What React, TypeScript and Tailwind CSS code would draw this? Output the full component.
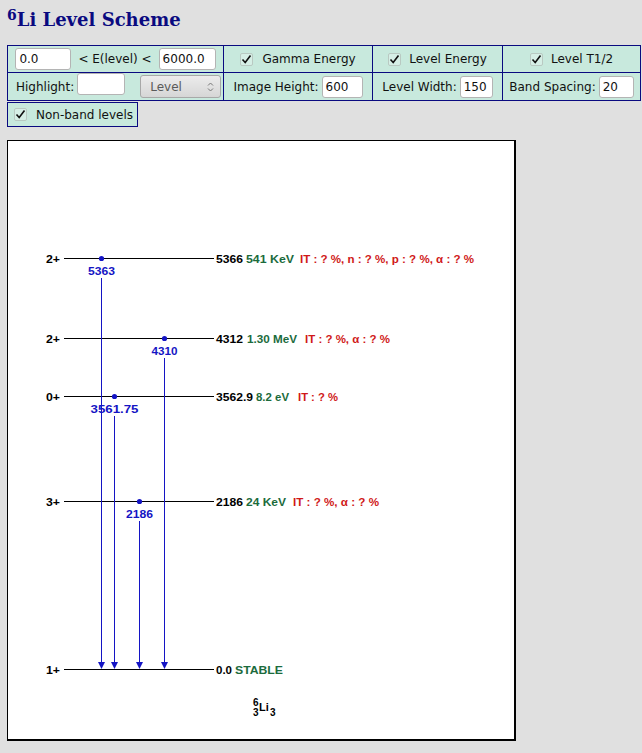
import React from "react";

const UI = { fontFamily: '"DejaVu Sans", Verdana, sans-serif' };
const DIAG = '"Liberation Sans", Arial, sans-serif';

function Check() {
  return (
    <span className="inline-flex items-center justify-center w-[13px] h-[13px] border border-[#b9c9c2] rounded-[2px] bg-[#d6efe6]">
      <svg width="11" height="11" viewBox="0 0 11 11">
        <path d="M1.5 5.5 L4.2 8.5 L9.5 1.5" fill="none" stroke="#111" strokeWidth="1.6" />
      </svg>
    </span>
  );
}

function Field({ value, w }: { value: string; w: string }) {
  return (
    <span
      className={`inline-flex items-center h-[22px] ${w} bg-white border border-[#b4b4b4] rounded-[3px] pl-[3px] text-[12px] text-[#111]`}
    >
      {value}
    </span>
  );
}

type Seg = { s: string; x: number; w: number };

// levels in svg coordinates (origin = inside top-left of image frame)
const levels: { y: number; spin: string; e: Seg; t: Seg; d?: Seg }[] = [
  {
    y: 117,
    spin: "2+",
    e: { s: "5366", x: 208, w: 27 },
    t: { s: "541 KeV", x: 238, w: 48 },
    d: { s: "IT : ? %, n : ? %, p : ? %, α : ? %", x: 292, w: 174 },
  },
  {
    y: 197,
    spin: "2+",
    e: { s: "4312", x: 208, w: 27 },
    t: { s: "1.30 MeV", x: 239, w: 50 },
    d: { s: "IT : ? %, α : ? %", x: 297, w: 85 },
  },
  {
    y: 255,
    spin: "0+",
    e: { s: "3562.9", x: 208, w: 37 },
    t: { s: "8.2 eV", x: 248, w: 33 },
    d: { s: "IT : ? %", x: 290, w: 40 },
  },
  {
    y: 360,
    spin: "3+",
    e: { s: "2186", x: 208, w: 27 },
    t: { s: "24 KeV", x: 238, w: 40 },
    d: { s: "IT : ? %, α : ? %", x: 285, w: 86 },
  },
  {
    y: 528,
    spin: "1+",
    e: { s: "0.0", x: 208, w: 16 },
    t: { s: "STABLE", x: 227, w: 48 },
  },
];

const gammas = [
  { x: 93, from: 117, label: "5363", w: 27 },
  { x: 156, from: 197, label: "4310", w: 26 },
  { x: 106, from: 255, label: "3561.75", w: 48 },
  { x: 131, from: 360, label: "2186", w: 27 },
];

function T({ seg, y, fill }: { seg: Seg; y: number; fill: string }) {
  return (
    <text x={seg.x} y={y} fill={fill} textLength={seg.w} lengthAdjust="spacingAndGlyphs">
      {seg.s}
    </text>
  );
}

function Scheme() {
  const blue = "#1414c4";
  return (
    <svg width="506" height="598" viewBox="0 0 506 598" fontFamily={DIAG} fontWeight="bold" fontSize="11">
      {levels.map((l) => (
        <g key={l.e.s}>
          <text x="38" y={l.y + 4.5} fill="#000" textLength="14" lengthAdjust="spacingAndGlyphs">
            {l.spin}
          </text>
          <line x1="56" x2="206" y1={l.y + 0.5} y2={l.y + 0.5} stroke="#000" strokeWidth="1" />
          <T seg={l.e} y={l.y + 4.5} fill="#000" />
          <T seg={l.t} y={l.y + 4.5} fill="#1b6b3c" />
          {l.d && <T seg={l.d} y={l.y + 4.5} fill="#d01818" />}
        </g>
      ))}
      {gammas.map((g) => (
        <g key={g.label}>
          <line x1={g.x + 0.5} x2={g.x + 0.5} y1={g.from + 20} y2="522" stroke={blue} strokeWidth="1" />
          <circle cx={g.x + 0.5} cy={g.from + 0.5} r="2.6" fill={blue} />
          <text
            x={g.x + 0.5 - g.w / 2}
            y={g.from + 16.5}
            fill={blue}
            textLength={g.w}
            lengthAdjust="spacingAndGlyphs"
          >
            {g.label}
          </text>
          <polygon points={`${g.x - 3},521 ${g.x + 4},521 ${g.x + 0.5},528`} fill={blue} />
        </g>
      ))}
      <text x="245" y="565" fill="#000" fontSize="10">6</text>
      <text x="245" y="575" fill="#000" fontSize="10">3</text>
      <text x="251" y="570" fill="#000" fontSize="11">Li</text>
      <text x="262" y="575" fill="#000" fontSize="10">3</text>
    </svg>
  );
}

export default function App() {
  return (
    <div className="min-h-screen bg-[#e0e0e0] pl-[7px] pt-[8px] pb-4" style={UI}>
      {/* Title */}
      <h1
        className="h-[24px] leading-[24px] text-[18px] font-bold text-[#0a0a80] whitespace-nowrap"
        style={{ fontFamily: '"DejaVu Serif", "Liberation Serif", serif' }}
      >
        <span className="text-[14px] relative -top-[6px]">6</span>Li Level Scheme
      </h1>

      {/* Controls */}
      <div className="mt-[13px] grid grid-cols-[215px_148px_129px_137px] grid-rows-[26px_27px] gap-px p-px bg-[#0a0a80] w-max text-[12px] text-[#111] whitespace-nowrap">
        <div className="bg-[#c8e9dd] flex items-center justify-center gap-[7px]">
          <Field value="0.0" w="w-[56px]" />
          <span>&lt; E(level) &lt;</span>
          <Field value="6000.0" w="w-[57px]" />
        </div>
        <div className="bg-[#c8e9dd] flex items-center justify-center gap-[9px]">
          <Check />
          <span>Gamma Energy</span>
        </div>
        <div className="bg-[#c8e9dd] flex items-center justify-center gap-[8px]">
          <Check />
          <span>Level Energy</span>
        </div>
        <div className="bg-[#c8e9dd] flex items-center justify-center gap-[8px]">
          <Check />
          <span>Level T1/2</span>
        </div>

        <div className="bg-[#c8e9dd] flex items-center pl-[8px]">
          <span>Highlight:</span>
          <span className="ml-[3px]">
            <Field value="" w="w-[48px]" />
          </span>
          <span className="ml-[15px] inline-flex items-center justify-between h-[23px] w-[81px] rounded-[3px] border border-[#a8a8a8] bg-gradient-to-b from-[#ececec] to-[#d6d6d6] pl-[9px] pr-[6px] text-[#5a5a5a]">
            Level
            <svg width="7" height="12" viewBox="0 0 7 12">
              <path d="M1 4.5 L3.5 2 L6 4.5" fill="none" stroke="#777" strokeWidth="1" />
              <path d="M1 7.5 L3.5 10 L6 7.5" fill="none" stroke="#777" strokeWidth="1" />
            </svg>
          </span>
        </div>
        <div className="bg-[#c8e9dd] flex items-center justify-center gap-[3px]">
          <span>Image Height:</span>
          <Field value="600" w="w-[41px]" />
        </div>
        <div className="bg-[#c8e9dd] flex items-center justify-center gap-[3px]">
          <span>Level Width:</span>
          <Field value="150" w="w-[33px]" />
        </div>
        <div className="bg-[#c8e9dd] flex items-center justify-center gap-[3px]">
          <span>Band Spacing:</span>
          <Field value="20" w="w-[35px]" />
        </div>
      </div>

      <div className="mt-px w-[131px] h-[25px] border border-[#0a0a80] bg-[#c8e9dd] flex items-center pl-[6px] gap-[9px] text-[12px] text-[#111] whitespace-nowrap">
        <Check />
        <span>Non-band levels</span>
      </div>

      {/* Level scheme image */}
      <div className="mt-[13px] w-max bg-white border-t border-l border-r-2 border-b-2 border-black">
        <Scheme />
      </div>
    </div>
  );
}
